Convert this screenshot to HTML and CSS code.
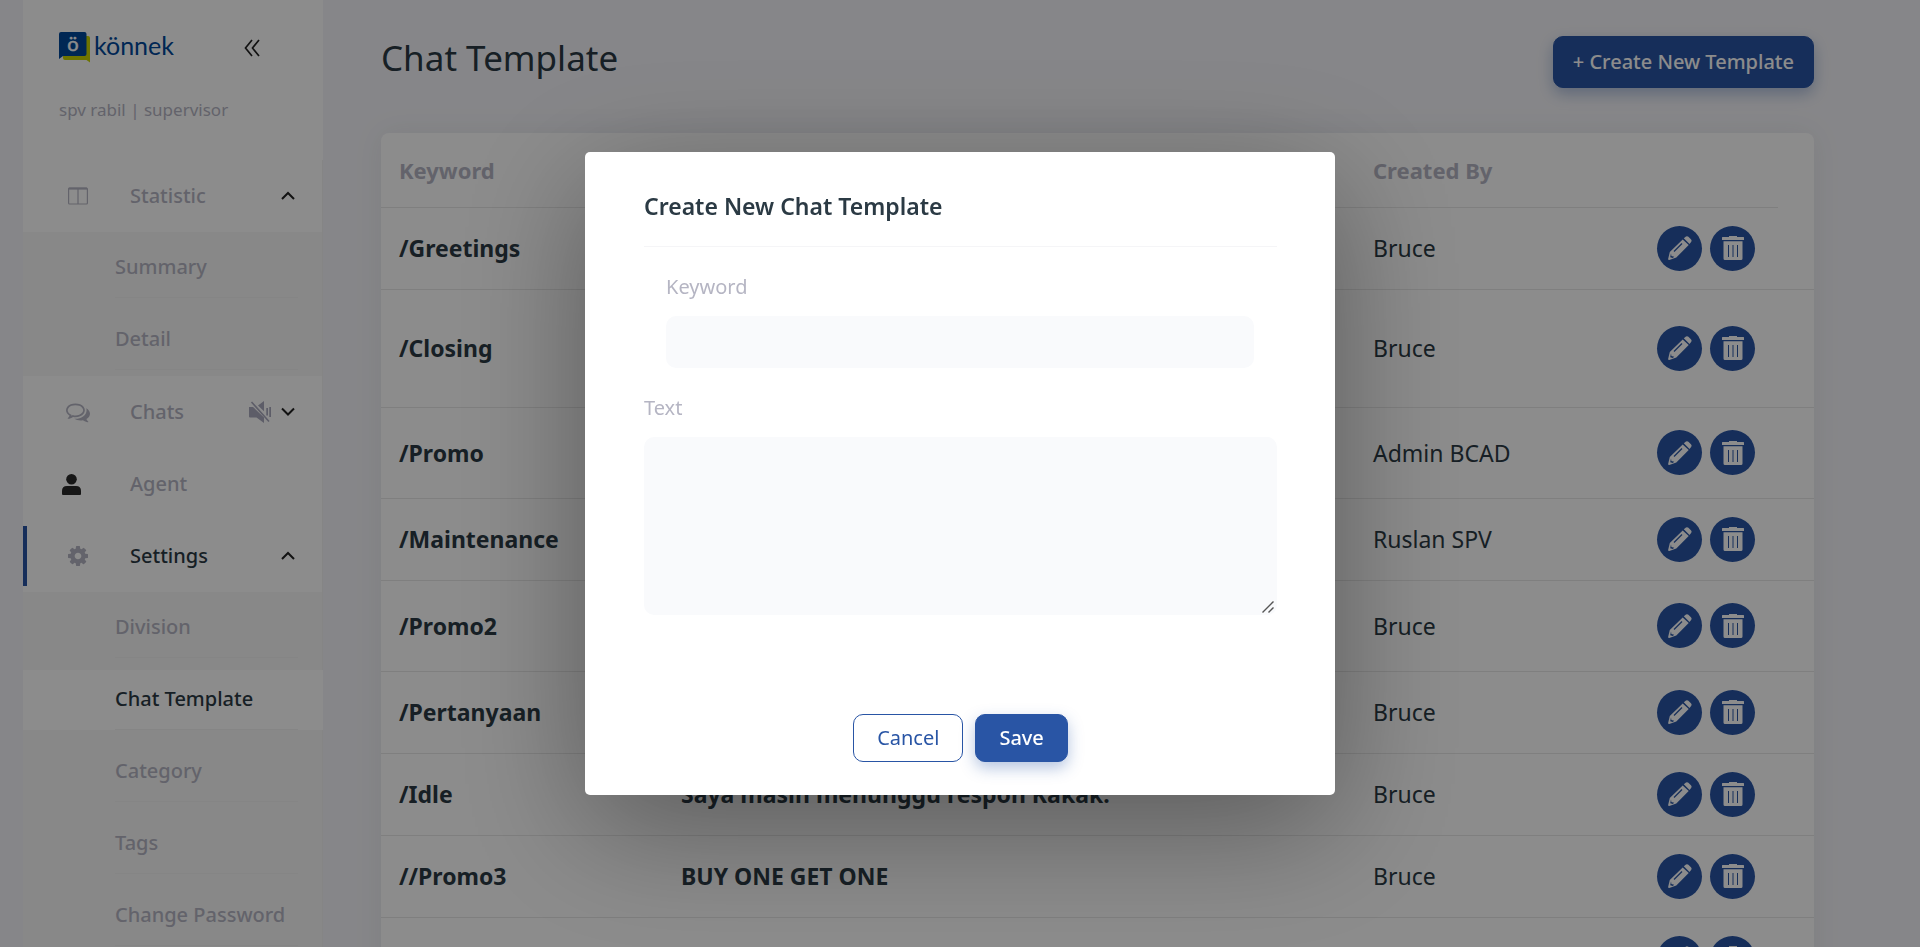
FILE: index.html
```html
<!DOCTYPE html>
<html lang="en">
<head>
<meta charset="utf-8">
<title>Chat Template</title>
<link rel="stylesheet" href="styles.css">
</head>
<body>
<svg class="sprite" aria-hidden="true">
  <symbol id="pencil" viewBox="0 0 24 24">
    <path fill="currentColor" d="M15.800 2.300 18 .5q1.200-.8 2.400.2l2.500 2.500q1.300 1.400.2 2.700L21.500 8zM14.700 3.400l6 5.700L8.300 21.500 1.300 24 0 23.500l1.800-7.400z"/>
    <path fill="none" stroke="#2955a5" stroke-width="1.200" d="M6 15.500 14 7.500"/>
    <path fill="#2955a5" d="m3 17.500.4 2.600 2.800.600-1.400 1.400-2.600-.8z"/>
  </symbol>
  <symbol id="trash" viewBox="0 0 22 24">
    <path fill="currentColor" d="M0 1.500q0-.5.600-.5H7V0h8v1h6.400q.6 0 .6.500V4H0zM1.500 5.200h19V22.500q0 1.500-1.500 1.500H3q-1.500 0-1.500-1.500z"/>
    <path stroke="#2955a5" stroke-width="1" d="M6.500 9v12M11 9v12M15.500 9v12"/>
  </symbol>
  <symbol id="up" viewBox="0 0 14 10"><path fill="none" stroke="currentColor" stroke-width="2" d="m1 8 6-6 6 6"/></symbol>
  <symbol id="down" viewBox="0 0 14 10"><path fill="none" stroke="currentColor" stroke-width="2" d="m1 1.500 6 6 6-6"/></symbol>
</svg>

<div class="app">
  <aside class="sidebar">
    <header class="brand">
      <div class="brand-row">
        <svg class="logo" viewBox="0 0 116 32" role="img" aria-label="könnek">
          <path fill="#c8d400" d="M4 4h25q2 0 2 2v24.500L27.500 28H6q-2 0-2-2z"/>
          <path fill="#00489a" d="M0 2q0-2 2-2h23.500q2 0 2 2v20q0 2-2 2H4l-4 3z"/>
          <text class="logo-mark" x="14" y="19" text-anchor="middle">ö</text>
          <text class="logo-text" x="35" y="23">könnek</text>
        </svg>
        <button class="collapse" aria-label="Collapse menu">
          <svg viewBox="0 0 16 18"><path fill="none" stroke="currentColor" stroke-width="1.700" d="M8 1 1.500 9 8 17M15 1 8.500 9l6.500 8"/></svg>
        </button>
      </div>
      <p class="user">spv rabil | supervisor</p>
    </header>

    <nav class="menu">
      <a class="item" href="#">
        <svg class="icon" viewBox="0 0 20 18"><path fill="none" stroke="currentColor" stroke-width="1.200" d="M1.500 1h17q.9 0 .9.900v14.200q0 .9-.9.900h-17q-.9 0-.9-.9V1.900q0-.9.900-.9zM10 1v16"/><path stroke="currentColor" stroke-width="2" d="M1 1.600h18"/></svg>
        <span class="label">Statistic</span>
        <svg class="chevron"><use href="#up"/></svg>
      </a>
      <div class="submenu">
        <a class="sub" href="#"><span>Summary</span></a>
        <a class="sub" href="#"><span>Detail</span></a>
      </div>
      <a class="item" href="#">
        <svg class="icon wide" viewBox="0 0 1792 1792"><path fill="currentColor" d="M704 384q-153 0-286 52t-211.500 141-78.500 191q0 82 53 158t149 132l97 56-35 84q34-20 62-39l44-31 53 10q78 14 153 14 153 0 286-52t211.500-141 78.500-191-78.500-191-211.500-141-286-52zm0-128q191 0 353.500 68.500t256.500 186.500 94 257-94 257-256.500 186.500-353.500 68.500q-86 0-176-16-124 88-278 128-36 9-86 16h-3q-11 0-20.500-8t-11.500-21q-1-3-1-6.500t.5-6.500 2-6l2.500-5 3.500-5.500 4-5 4.500-5 4-4.500q5-6 23-25t26-29.500 22.500-29 25-38.500 20.500-44q-124-72-195-177t-71-224q0-139 94-257t256.500-186.500 353.500-68.500zm822 1169q10 24 20.500 44t25 38.500 22.500 29 26 29.500 23 25q1 1 4 4.500t4.500 5 4 5 3.500 5.500l2.500 5 2 6 .5 6.500-1 6.500q-3 14-13 22t-22 7q-50-7-86-16-154-40-278-128-90 16-176 16-271 0-472-132 58 4 88 4 161 0 309-45t264-129q125-92 192-212t67-254q0-77-23-152 129 71 204 178t75 230q0 120-71 224.500t-195 176.500z"/></svg>
        <span class="label">Chats</span>
        <svg class="mute" viewBox="0 0 22 22"><path fill="currentColor" d="M0 6h4l11 10.500V22l-7.500-5.500H1q-1 0-1-1zM9 4.500 15 0v10.200zM17.300 7h1.700v7.500h-1.700zM20.300 6H22v10h-1.700z"/><path stroke="currentColor" stroke-width="1.600" d="m2.500 1 17.500 19.500"/></svg>
        <svg class="chevron"><use href="#down"/></svg>
      </a>
      <a class="item" href="#">
        <svg class="icon person" viewBox="0 0 19 21"><circle cx="9.500" cy="5.300" r="5.300" fill="currentColor"/><path fill="currentColor" d="M0 20v-3q0-5 5-5h9q5 0 5 5v3q0 1-1 1H1q-1 0-1-1z"/></svg>
        <span class="label">Agent</span>
      </a>
      <a class="item active" href="#">
        <svg class="icon" viewBox="128 128 1536 1536"><path fill="currentColor" d="M1152 896q0-106-75-181t-181-75-181 75-75 181 75 181 181 75 181-75 75-181zm512-109v222q0 12-8 23t-20 13l-185 28q-19 54-39 91 35 50 107 138 10 12 10 25t-9 23q-27 37-99 108t-94 71q-12 0-26-9l-138-108q-44 23-91 38-16 136-29 186-7 28-36 28h-222q-14 0-24.500-8.500t-11.500-21.500l-28-184q-49-16-90-37l-141 107q-10 9-25 9-14 0-25-11-126-114-165-168-7-10-7-23 0-12 8-23 15-21 51-66.500t54-70.500q-27-50-41-99l-183-27q-13-2-21-12.500t-8-23.500v-222q0-12 8-23t19-13l186-28q14-46 39-92-40-57-107-138-10-12-10-24 0-10 9-23 26-36 98.500-107.500t94.500-71.500q13 0 26 10l138 107q44-23 91-38 16-136 29-186 7-28 36-28h222q14 0 24.500 8.500t11.500 21.500l28 184q49 16 90 37l142-107q9-9 24-9 13 0 25 10 129 119 165 170 7 8 7 22 0 12-8 23-15 21-51 66.500t-54 70.500q26 50 41 98l183 28q13 2 21 12.500t8 23.500z"/></svg>
        <span class="label">Settings</span>
        <svg class="chevron"><use href="#up"/></svg>
      </a>
      <div class="submenu">
        <a class="sub" href="#"><span>Division</span></a>
        <a class="sub current" href="#"><span>Chat Template</span></a>
        <a class="sub" href="#"><span>Category</span></a>
        <a class="sub" href="#"><span>Tags</span></a>
        <a class="sub" href="#"><span>Change Password</span></a>
      </div>
    </nav>
  </aside>

  <main class="content">
    <div class="page-head">
      <h1>Chat Template</h1>
      <button class="btn primary large">+ Create New Template</button>
    </div>
    <div class="card">
      <table class="templates">
        <colgroup><col class="c-key"><col><col class="c-by"><col class="c-act"><col class="c-end"></colgroup>
        <thead><tr><th>Keyword</th><th></th><th>Created By</th><th></th></tr></thead>
        <tbody>
          <tr><td class="strong">/Greetings</td><td class="strong"></td><td>Bruce</td><td colspan="2"><div class="actions"><button aria-label="Edit"><svg><use href="#pencil"/></svg></button><button aria-label="Delete"><svg><use href="#trash"/></svg></button></div></td></tr>
          <tr class="tall"><td class="strong">/Closing</td><td class="strong"></td><td>Bruce</td><td colspan="2"><div class="actions"><button aria-label="Edit"><svg><use href="#pencil"/></svg></button><button aria-label="Delete"><svg><use href="#trash"/></svg></button></div></td></tr>
          <tr class="medium"><td class="strong">/Promo</td><td class="strong"></td><td>Admin BCAD</td><td colspan="2"><div class="actions"><button aria-label="Edit"><svg><use href="#pencil"/></svg></button><button aria-label="Delete"><svg><use href="#trash"/></svg></button></div></td></tr>
          <tr><td class="strong">/Maintenance</td><td class="strong"></td><td>Ruslan SPV</td><td colspan="2"><div class="actions"><button aria-label="Edit"><svg><use href="#pencil"/></svg></button><button aria-label="Delete"><svg><use href="#trash"/></svg></button></div></td></tr>
          <tr class="medium"><td class="strong">/Promo2</td><td class="strong"></td><td>Bruce</td><td colspan="2"><div class="actions"><button aria-label="Edit"><svg><use href="#pencil"/></svg></button><button aria-label="Delete"><svg><use href="#trash"/></svg></button></div></td></tr>
          <tr><td class="strong">/Pertanyaan</td><td class="strong"></td><td>Bruce</td><td colspan="2"><div class="actions"><button aria-label="Edit"><svg><use href="#pencil"/></svg></button><button aria-label="Delete"><svg><use href="#trash"/></svg></button></div></td></tr>
          <tr><td class="strong">/Idle</td><td class="strong">Saya masih menunggu respon Kakak.</td><td>Bruce</td><td colspan="2"><div class="actions"><button aria-label="Edit"><svg><use href="#pencil"/></svg></button><button aria-label="Delete"><svg><use href="#trash"/></svg></button></div></td></tr>
          <tr><td class="strong">//Promo3</td><td class="strong">BUY ONE GET ONE</td><td>Bruce</td><td colspan="2"><div class="actions"><button aria-label="Edit"><svg><use href="#pencil"/></svg></button><button aria-label="Delete"><svg><use href="#trash"/></svg></button></div></td></tr>
          <tr><td></td><td></td><td></td><td colspan="2"><div class="actions"><button aria-label="Edit"><svg><use href="#pencil"/></svg></button><button aria-label="Delete"><svg><use href="#trash"/></svg></button></div></td></tr>
        </tbody>
      </table>
    </div>
  </main>
</div>

<div class="overlay">
  <form class="modal" role="dialog" aria-labelledby="modal-title">
    <h2 id="modal-title">Create New Chat Template</h2>
    <div class="field inset">
      <label for="keyword">Keyword</label>
      <input id="keyword" type="text">
    </div>
    <div class="field">
      <label for="text">Text</label>
      <textarea id="text"></textarea>
      <svg class="grip" viewBox="0 0 12 12" aria-hidden="true"><path stroke="currentColor" stroke-width="1.400" d="M.5 11.500l11-11M6.500 11.500l5-5"/></svg>
    </div>
    <div class="buttons">
      <button type="button" class="btn outline">Cancel</button>
      <button type="button" class="btn primary">Save</button>
    </div>
  </form>
</div>
</body>
</html>
```
FILE: styles.css
```css
:root {
  --blue: #2955a5;
  --ink: #2b3a44;
  --muted: #b5b5c3;
}

* { box-sizing: border-box; }

body {
  margin: 0;
  height: 100vh;
  overflow: hidden;
  background: #f5f5f9;
  color: var(--ink);
  font-family: "Noto Sans", "Open Sans", sans-serif;
  font-size: 20px;
  line-height: 28px;
}

h1, h2, p { margin: 0; font-weight: 400; }
a { color: inherit; text-decoration: none; }
button, input, textarea { font: inherit; color: inherit; }
.sprite { display: none; }

.app { display: flex; padding-left: 23px; }

/* Sidebar */
.sidebar { flex: none; width: 300px; background: #fff; }
.brand { height: 160px; padding: 32px 61px 0 36px; }
.brand-row { display: flex; align-items: flex-start; justify-content: space-between; }
.logo { width: 116px; height: 32px; overflow: visible; }
.logo-mark { font: 400 20px Lato, sans-serif; fill: #fff; stroke: #fff; stroke-width: .5px; }
.logo-text { font: 400 25px Lato, sans-serif; fill: #00489a; }
.collapse { padding: 7px 2px 0; border: 0; background: none; color: #222; line-height: 0; }
.collapse svg { width: 16px; height: 18px; }
.user { margin-top: 32px; color: var(--muted); font-size: 17px; }

.menu {
  display: flex;
  flex-direction: column;
  border-right: 1px solid #f2f2f2;
  color: var(--muted);
  font-weight: 500;
}
.item {
  display: flex;
  align-items: center;
  height: 60px;
  margin: 6px 0;
  padding: 0 27px 0 41px;
  border-left: 4px solid transparent;
}
.item .icon { flex: none; width: 20px; height: 20px; margin-right: 42px; }
.item .wide { width: 24px; height: 24px; margin: 0 40px 0 -2px; }
.item .person { width: 19px; height: 21px; margin: 0 49px 0 -6px; color: #2b2b2b; }
.label { flex: 1; }
.mute { width: 22px; height: 22px; margin-right: 10px; color: #a9a9bd; }
.chevron { flex: none; width: 14px; height: 10px; color: #222; }
.item.active { border-color: var(--blue); }
.active .label { color: var(--ink); }

.submenu { padding: 6px 0; background: #f8f8f8; }
.sub { display: flex; align-items: stretch; height: 60px; padding: 0 24px 0 92px; }
.sub + .sub { margin-top: 12px; }
.sub span { flex: 1; padding-top: 15px; border-bottom: 1px solid #f2f2f2; white-space: nowrap; }
.sub.current { margin-right: -1px; padding-right: 25px; background: #fff; color: var(--ink); }

/* Page */
.content { flex: 1; min-width: 0; padding: 36px 106px 0 58px; }
.page-head { display: flex; justify-content: space-between; margin-bottom: 45px; }
h1 { font-size: 35px; line-height: 44px; }

.btn {
  height: 48px;
  padding: 0 23px;
  border: 1px solid var(--blue);
  border-radius: 10px;
}
.primary { background: var(--blue); color: #fff; box-shadow: 0 6px 15px rgba(41, 85, 165, .35); font-weight: 500; }
.outline { background: #fff; color: var(--blue); }
.large { height: 52px; padding: 0 19px; }

.card { border-radius: 8px; background: #fff; box-shadow: 0 0 30px rgba(40, 60, 90, .08); }
.templates { width: 100%; table-layout: fixed; border-collapse: collapse; font-size: 23px; }
.c-key { width: 282px; }
.c-by { width: 284px; }
.c-act { width: 139px; }
.c-end { width: 36px; }
th, td { height: 82px; padding: 0 18px; border-bottom: 1px solid #e8e8e8; text-align: left; }
th { height: 74px; color: var(--muted); font-size: 22px; font-weight: 700; }
.tall td { height: 118px; }
.medium td { height: 91px; }
.strong { font-weight: 700; white-space: nowrap; }
.actions { display: flex; gap: 8px; }
.actions button {
  display: grid;
  place-items: center;
  width: 45px;
  height: 45px;
  padding: 0;
  border: 0;
  border-radius: 50%;
  background: var(--blue);
  color: #fff;
}
.actions svg { width: 24px; height: 24px; }

/* Dialog */
.overlay {
  position: fixed;
  inset: 0;
  display: flex;
  align-items: center;
  justify-content: center;
  background: rgba(0, 0, 0, .45);
}
.modal {
  width: 750px;
  padding: 39px 58px 33px 59px;
  border-radius: 5px;
  background: #fff;
  box-shadow: 0 32px 128px rgba(0, 0, 0, .36);
}
h2 { padding: 1px 0 26px; border-bottom: 1px solid #f5f5f7; font-size: 23px; font-weight: 600; }
.field { position: relative; display: flex; flex-direction: column; color: var(--muted); }
.field label { margin-bottom: 15px; }
.field input, .field textarea { border: 0; border-radius: 10px; background: #f9fafc; color: var(--ink); }
.inset { padding: 26px 23px 26px 22px; }
.field input { height: 52px; }
.field textarea { height: 178px; }
.field textarea::-webkit-resizer { background: transparent; }
.grip { position: absolute; right: 3px; bottom: 2px; width: 12px; height: 12px; color: #555; pointer-events: none; }
.buttons { display: flex; justify-content: center; gap: 12px; margin-top: 99px; }
```
